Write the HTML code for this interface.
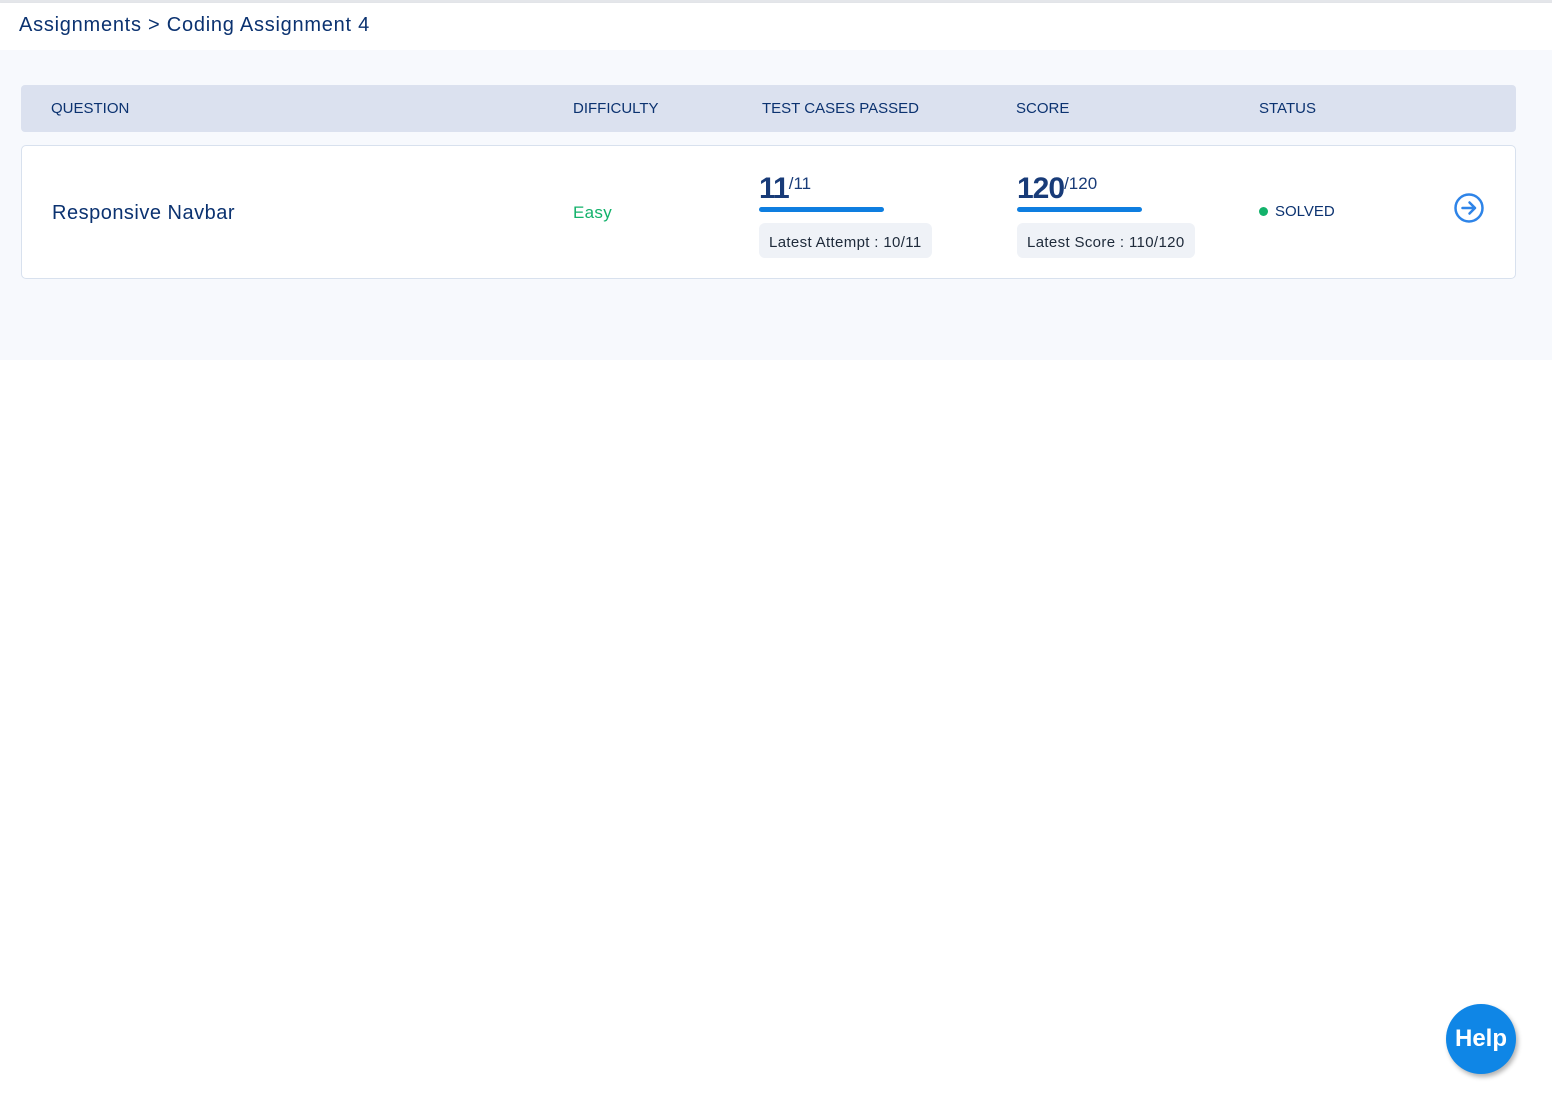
<!DOCTYPE html>
<html><head><meta charset="utf-8"><style>
*{box-sizing:border-box;margin:0;padding:0}
body{width:1552px;height:1104px;background:#fff;font-family:"Liberation Sans",sans-serif;position:relative;overflow:hidden}
.topbar{position:absolute;left:0;top:0;width:1552px;height:3px;background:#e4e6ea}
.hdr{position:absolute;left:0;top:3px;width:1552px;height:47px;background:#fff;box-shadow:0 1px 3px rgba(0,0,0,0.06)}
.hdr span{position:absolute;left:19px;top:11px;font-size:20px;color:#0b3270;letter-spacing:0.75px}
.main{position:absolute;left:0;top:50px;width:1552px;height:310px;background:#f7f9fd}
.th{position:absolute;left:21px;top:35px;width:1495px;height:47px;background:#dbe1ef;border-radius:4px;font-size:15px;color:#0b3270}
.th span{position:absolute;top:15px}
.row{position:absolute;left:21px;top:95px;width:1495px;height:134px;background:#fff;border:1px solid #d8e1ee;border-radius:5px}
.abs{position:absolute}
.big{font-size:30px;font-weight:bold;color:#183b78;letter-spacing:-1px}
.sup{font-size:17px;color:#183b78;vertical-align:top;position:relative;top:2px;font-weight:normal;letter-spacing:0}
.bar{height:5px;background:#0e7ee0;border-radius:3px}
.pill{background:#eff2f7;border-radius:6px;font-size:15px;color:#1e2a3a;height:35px;line-height:39px;padding:0 10px;letter-spacing:0.35px}
.help{position:absolute;left:1446px;top:1004px;width:70px;height:70px;border-radius:50%;background:#0f86e6;color:#fff;font-size:24px;font-weight:bold;text-align:center;line-height:70px;box-shadow:2px 3px 5px rgba(0,0,0,0.3)}
</style></head><body>
<div class="topbar"></div>
<div class="hdr"><span>Assignments &gt; Coding Assignment 4</span></div>
<div class="main">
 <div class="th">
  <span style="left:30px">QUESTION</span>
  <span style="left:552px">DIFFICULTY</span>
  <span style="left:741px">TEST CASES PASSED</span>
  <span style="left:995px">SCORE</span>
  <span style="left:1238px">STATUS</span>
 </div>
 <div class="row">
  <div class="abs" style="left:30px;top:56px;font-size:20px;color:#0b3270;letter-spacing:0.5px">Responsive Navbar</div>
  <div class="abs" style="left:551px;top:57px;font-size:17px;color:#13b26b;letter-spacing:0.3px">Easy</div>
  <div class="abs big" style="left:737px;top:26px">11<span class="sup">/11</span></div>
  <div class="abs bar" style="left:737px;top:61px;width:125px"></div>
  <div class="abs pill" style="left:737px;top:77px">Latest Attempt : 10/11</div>
  <div class="abs big" style="left:995px;top:26px">120<span class="sup">/120</span></div>
  <div class="abs bar" style="left:995px;top:61px;width:125px"></div>
  <div class="abs pill" style="left:995px;top:77px">Latest Score : 110/120</div>
  <div class="abs" style="left:1237px;top:61px;width:9px;height:9px;border-radius:50%;background:#13b26b"></div>
  <div class="abs" style="left:1253px;top:57px;font-size:15px;color:#0b3270">SOLVED</div>
  <svg class="abs" style="left:1431px;top:46px" width="32" height="32" viewBox="0 0 32 32"><circle cx="16" cy="16" r="13.5" fill="none" stroke="#2e84e8" stroke-width="2.5"/><path d="M9.5 16H22M16.5 10.5L22 16l-5.5 5.5" fill="none" stroke="#2e84e8" stroke-width="2.5" stroke-linecap="round" stroke-linejoin="round"/></svg>
 </div>
</div>
<div class="help">Help</div>
</body></html>
